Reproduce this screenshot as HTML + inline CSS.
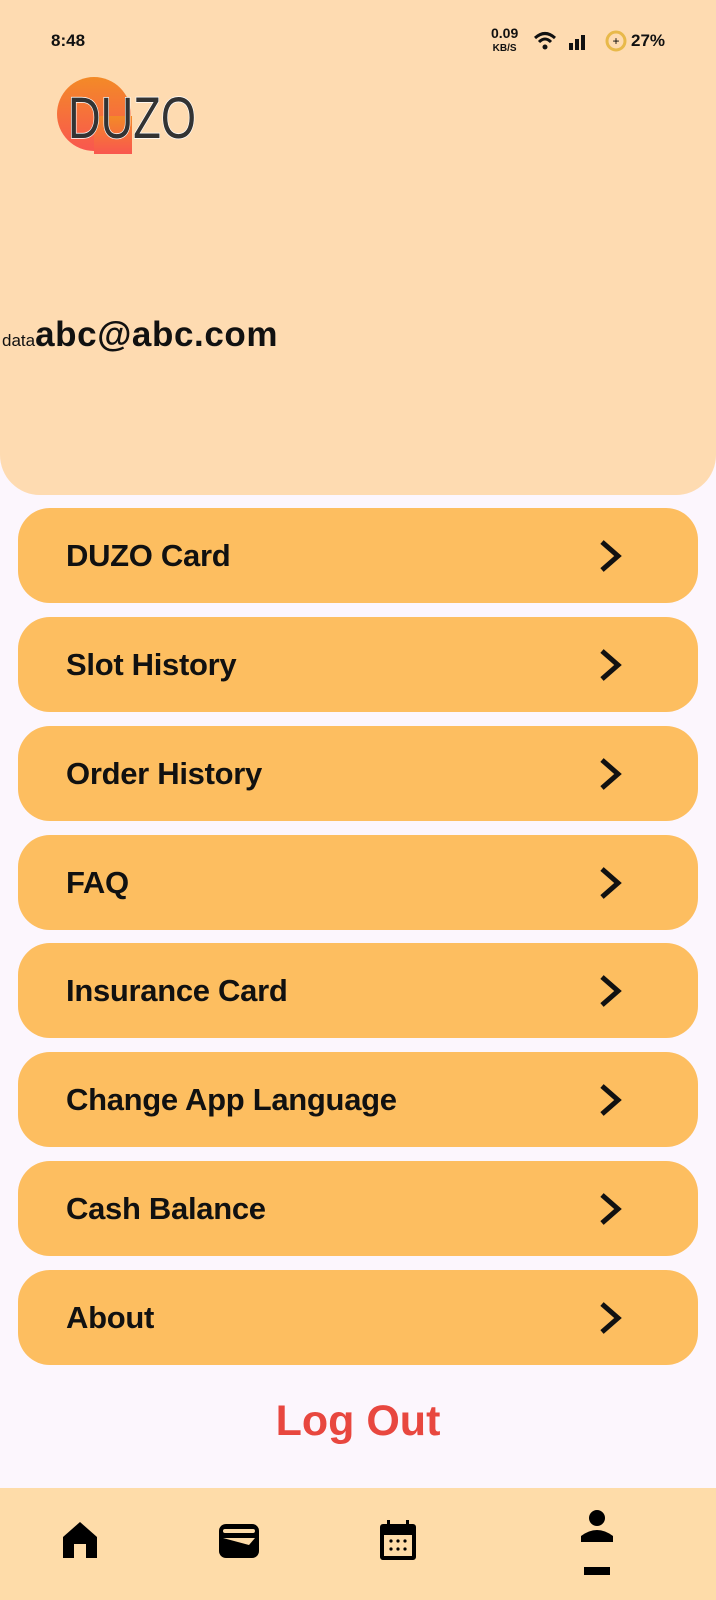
<!DOCTYPE html>
<html><head><meta charset="utf-8"><style>
*{margin:0;padding:0;box-sizing:border-box}
body{width:716px;height:1600px;background:#fcf6fd;font-family:"Liberation Sans",sans-serif;position:relative;overflow:hidden}
.hdr{position:absolute;left:0;top:0;width:716px;height:495px;background:#fedbb1;border-radius:0 0 40px 40px}
.t{position:absolute;font-size:17px;color:#111}
.row{position:absolute;left:18px;width:680px;height:95px;background:#fdbe60;border-radius:32px}
.row span{position:absolute;left:48px;top:50%;transform:translateY(-50%);font-size:31px;color:#111;font-weight:bold;letter-spacing:-0.3px}
.row svg{position:absolute;left:578px;top:30px}
.bar{position:absolute;left:0;top:1488px;width:716px;height:112px;background:#fedca9}
</style></head><body>
<div class="hdr"></div>
<div class="t" style="left:51px;top:31px;font-weight:bold">8:48</div>
<div class="t" style="left:491px;top:27px;font-size:14px;font-weight:bold;line-height:13px;text-align:center">0.09<br><span style="font-size:10px">KB/S</span></div>
<svg style="position:absolute;left:533px;top:30px" width="60" height="22" viewBox="0 0 60 22"><path d="M2 8 Q12 -1 22 8" stroke="#111" stroke-width="3" fill="none"/><path d="M6 12 Q12 6 18 12" stroke="#111" stroke-width="3" fill="none"/><circle cx="12" cy="17" r="2.5" fill="#111"/><rect x="36" y="13" width="4" height="7" fill="#111"/><rect x="42" y="9" width="4" height="11" fill="#111"/><rect x="48" y="5" width="4" height="15" fill="#111"/></svg>
<svg style="position:absolute;left:605px;top:30px" width="22" height="22"><circle cx="11" cy="11" r="9" stroke="#e8b94a" stroke-width="3" fill="none"/><text x="11" y="15" font-size="12" text-anchor="middle" font-family="Liberation Sans">+</text></svg>
<div class="t" style="left:631px;top:31px;font-weight:bold">27%</div>
<svg style="position:absolute;left:56px;top:76px" width="150" height="80" viewBox="0 0 150 80"><defs><linearGradient id="g" x1="0" y1="0" x2="0" y2="1"><stop offset="0" stop-color="#f38a27"/><stop offset="1" stop-color="#f9574f"/></linearGradient></defs><circle cx="38" cy="38" r="37" fill="url(#g)"/><rect x="38" y="40" width="38" height="38" fill="url(#g)"/><text x="12" y="62" font-size="58" font-family="Liberation Sans" fill="#333" stroke="#fff" stroke-width="1.5" paint-order="stroke" textLength="128" lengthAdjust="spacingAndGlyphs">DUZO</text></svg>
<div style="position:absolute;left:2px;top:315px;font-size:17px;color:#111;white-space:nowrap">data<span style="font-size:35px;font-weight:bold;letter-spacing:0.6px">abc@abc.com</span></div>
<div class="row" style="top:508px"><span>DUZO Card</span><svg width="30" height="36"><path d="M6 4 L22 18 L6 32" stroke="#111" stroke-width="5" fill="none"/></svg></div>
<div class="row" style="top:617px"><span>Slot History</span><svg width="30" height="36"><path d="M6 4 L22 18 L6 32" stroke="#111" stroke-width="5" fill="none"/></svg></div>
<div class="row" style="top:726px"><span>Order History</span><svg width="30" height="36"><path d="M6 4 L22 18 L6 32" stroke="#111" stroke-width="5" fill="none"/></svg></div>
<div class="row" style="top:835px"><span>FAQ</span><svg width="30" height="36"><path d="M6 4 L22 18 L6 32" stroke="#111" stroke-width="5" fill="none"/></svg></div>
<div class="row" style="top:943px"><span>Insurance Card</span><svg width="30" height="36"><path d="M6 4 L22 18 L6 32" stroke="#111" stroke-width="5" fill="none"/></svg></div>
<div class="row" style="top:1052px"><span>Change App Language</span><svg width="30" height="36"><path d="M6 4 L22 18 L6 32" stroke="#111" stroke-width="5" fill="none"/></svg></div>
<div class="row" style="top:1161px"><span>Cash Balance</span><svg width="30" height="36"><path d="M6 4 L22 18 L6 32" stroke="#111" stroke-width="5" fill="none"/></svg></div>
<div class="row" style="top:1270px"><span>About</span><svg width="30" height="36"><path d="M6 4 L22 18 L6 32" stroke="#111" stroke-width="5" fill="none"/></svg></div>
<div style="position:absolute;left:0;width:716px;top:1397px;text-align:center;font-size:43px;font-weight:bold;color:#e8473f">Log Out</div>
<div class="bar"></div>
<svg style="position:absolute;left:63px;top:1522px" width="34" height="36" viewBox="0 0 34 36"><path d="M0 15 L17 0 L34 15 L34 36 L23 36 L23 22 L11 22 L11 36 L0 36 Z" fill="#000"/></svg>
<svg style="position:absolute;left:219px;top:1524px" width="40" height="34" viewBox="0 0 40 34"><rect x="0" y="0" width="40" height="34" rx="7" fill="#000"/><rect x="4" y="5" width="32" height="4" rx="2" fill="#fedca9"/><path d="M4 14 L36 14 L30 21 Z" fill="#fedca9"/></svg>
<svg style="position:absolute;left:380px;top:1520px" width="36" height="40" viewBox="0 0 36 40"><rect x="0" y="4" width="36" height="36" rx="3" fill="#000"/><rect x="7" y="0" width="3" height="8" fill="#000"/><rect x="26" y="0" width="3" height="8" fill="#000"/><rect x="4" y="15" width="28" height="21" fill="#fedca9"/><g fill="#000"><circle cx="11" cy="21" r="1.6"/><circle cx="18" cy="21" r="1.6"/><circle cx="25" cy="21" r="1.6"/><circle cx="11" cy="29" r="1.6"/><circle cx="18" cy="29" r="1.6"/><circle cx="25" cy="29" r="1.6"/></g></svg>
<svg style="position:absolute;left:580px;top:1510px" width="34" height="70" viewBox="0 0 34 70"><ellipse cx="17" cy="8" rx="8" ry="8" fill="#000"/><path d="M1 32 L1 26 Q17 14 33 26 L33 32 Z" fill="#000"/><rect x="4" y="57" width="26" height="8" fill="#000"/></svg>
</body></html>
